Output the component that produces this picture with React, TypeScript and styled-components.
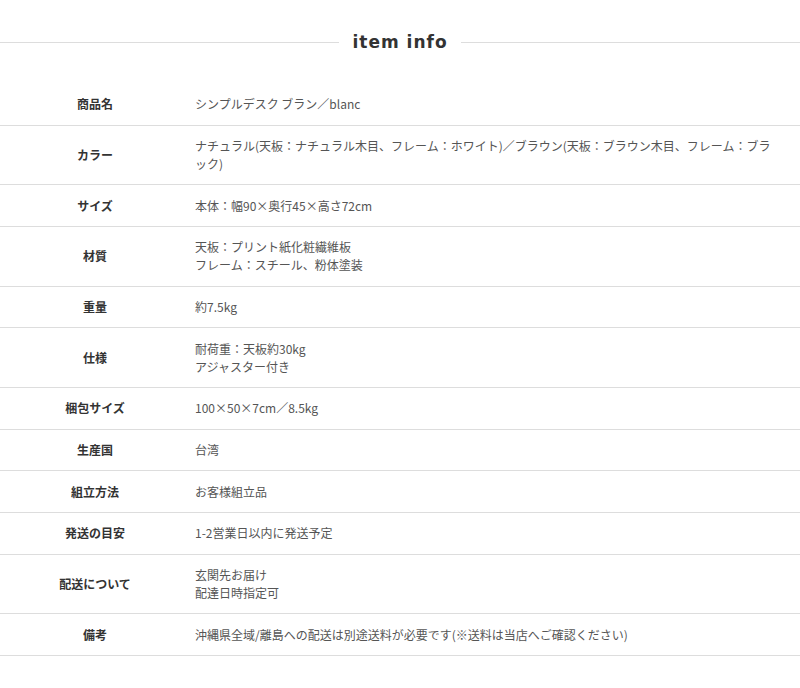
import styled, { createGlobalStyle } from "styled-components";

interface SpecRow {
    label: string;
    lines: string[];
}

const specs: SpecRow[] = [
    { label: "商品名", lines: ["シンプルデスク ブラン／blanc"] },
    {
        label: "カラー",
        lines: [
            "ナチュラル(天板：ナチュラル木目、フレーム：ホワイト)／ブラウン(天板：ブラウン木目、フレーム：ブラック)",
        ],
    },
    { label: "サイズ", lines: ["本体：幅90×奥行45×高さ72cm"] },
    { label: "材質", lines: ["天板：プリント紙化粧繊維板", "フレーム：スチール、粉体塗装"] },
    { label: "重量", lines: ["約7.5kg"] },
    { label: "仕様", lines: ["耐荷重：天板約30kg", "アジャスター付き"] },
    { label: "梱包サイズ", lines: ["100×50×7cm／8.5kg"] },
    { label: "生産国", lines: ["台湾"] },
    { label: "組立方法", lines: ["お客様組立品"] },
    { label: "発送の目安", lines: ["1-2営業日以内に発送予定"] },
    { label: "配送について", lines: ["玄関先お届け", "配達日時指定可"] },
    { label: "備考", lines: ["沖縄県全域/離島への配送は別途送料が必要です(※送料は当店へご確認ください)"] },
];

/*---> Main Component <---*/
const App = () => {
    return (
        <>
            <GlobalStyle />
            <Section>
                <Heading>
                    <Rule />
                    <Title>item info</Title>
                    <Rule />
                </Heading>

                <SpecTable>
                    {specs.map((row) => (
                        <Row key={row.label}>
                            <Label>{row.label}</Label>
                            <Value>
                                {row.lines.map((line) => (
                                    <div key={line}>{line}</div>
                                ))}
                            </Value>
                        </Row>
                    ))}
                </SpecTable>
            </Section>
        </>
    );
};

export default App;


const GlobalStyle = createGlobalStyle`
    body {
        margin: 0;
        background: #ffffff;
        font-family: "Noto Sans CJK JP", "Noto Sans", sans-serif;
    }
`;

const Section = styled.section`
    width: 800px;
`;

const Heading = styled.div`
    display: flex;
    align-items: center;
    height: 84px;
    gap: 13px;
`;

const Rule = styled.span`
    flex: 1;
    height: 1px;
    background: #dddddd;
`;

const Title = styled.h2`
    margin: 0;
    font-family: "DejaVu Sans", sans-serif;
    font-size: 17px;
    font-weight: 600;
    letter-spacing: 1px;
    color: #333333;
`;

const SpecTable = styled.div`
    display: flex;
    flex-direction: column;
`;

const Row = styled.div`
    display: grid;
    grid-template-columns: 190px 1fr;
    align-items: center;
    border-bottom: 1px solid #dddddd;
    padding: 11.33px 0;
    font-size: 12px;
    line-height: 18px;
`;

const Label = styled.div`
    text-align: center;
    font-weight: 700;
    color: #333333;
`;

const Value = styled.div`
    padding: 0 20px 0 5px;
    color: #555555;
`;
